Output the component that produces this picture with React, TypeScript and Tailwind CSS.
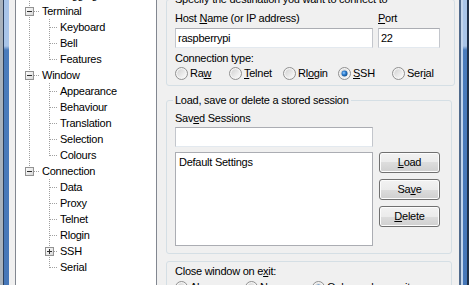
type TreeRow = {
  label: string
  level: 0 | 1
  box?: 'minus' | 'plus'
  trunk?: 'full' | 'top' | 'bottom'
  branch?: 'full' | 'top'
}

const rows: TreeRow[] = [
  { label: 'Session', level: 0, box: 'minus', trunk: 'bottom' },
  { label: 'Logging', level: 1, trunk: 'full', branch: 'top' },
  { label: 'Terminal', level: 0, box: 'minus', trunk: 'full' },
  { label: 'Keyboard', level: 1, trunk: 'full', branch: 'full' },
  { label: 'Bell', level: 1, trunk: 'full', branch: 'full' },
  { label: 'Features', level: 1, trunk: 'full', branch: 'top' },
  { label: 'Window', level: 0, box: 'minus', trunk: 'full' },
  { label: 'Appearance', level: 1, trunk: 'full', branch: 'full' },
  { label: 'Behaviour', level: 1, trunk: 'full', branch: 'full' },
  { label: 'Translation', level: 1, trunk: 'full', branch: 'full' },
  { label: 'Selection', level: 1, trunk: 'full', branch: 'full' },
  { label: 'Colours', level: 1, trunk: 'full', branch: 'top' },
  { label: 'Connection', level: 0, box: 'minus', trunk: 'top' },
  { label: 'Data', level: 1, branch: 'full' },
  { label: 'Proxy', level: 1, branch: 'full' },
  { label: 'Telnet', level: 1, branch: 'full' },
  { label: 'Rlogin', level: 1, branch: 'full' },
  { label: 'SSH', level: 1, branch: 'full', box: 'plus' },
  { label: 'Serial', level: 1, branch: 'top' },
]

const dot = '#a0a0a0'

function Connector({ row }: { row: TreeRow }) {
  const w = row.level === 0 ? 26 : 44
  const bx = row.level === 0 ? 13 : 33
  const hEnd = row.level === 0 ? 24 : 42
  return (
    <svg width={w} height={16} className="shrink-0">
      <defs>
        <linearGradient id="exp" x1="0" y1="0" x2="1" y2="1">
          <stop offset="0" stopColor="#ffffff" />
          <stop offset="1" stopColor="#d6d6d6" />
        </linearGradient>
      </defs>
      {row.trunk && (
        <line
          x1={13.5}
          x2={13.5}
          y1={row.trunk === 'bottom' ? 8 : 0}
          y2={row.trunk === 'top' ? 9 : 16}
          stroke={dot}
          strokeDasharray="1 1"
        />
      )}
      {row.branch && (
        <line x1={33.5} x2={33.5} y1={0} y2={row.branch === 'top' ? 9 : 16} stroke={dot} strokeDasharray="1 1" />
      )}
      <line x1={row.box ? bx + 5 : bx + 1} x2={hEnd} y1={8.5} y2={8.5} stroke={dot} strokeDasharray="1 1" />
      {row.box && (
        <g>
          <rect x={bx - 3.5} y={4.5} width={8} height={8} fill="url(#exp)" stroke="#929292" />
          <line x1={bx - 2} x2={bx + 3} y1={8.5} y2={8.5} stroke="#2e2e2e" />
          {row.box === 'plus' && <line x1={bx + 0.5} x2={bx + 0.5} y1={6} y2={11} stroke="#2e2e2e" />}
        </g>
      )}
    </svg>
  )
}

function Radio({ checked = false }: { checked?: boolean }) {
  return (
    <svg width={13} height={13} className="shrink-0">
      <defs>
        <linearGradient id="rdo" x1="0" y1="0" x2="1" y2="1">
          <stop offset="0" stopColor="#d2d2d2" />
          <stop offset="1" stopColor="#fbfbfb" />
        </linearGradient>
        <radialGradient id="rdot" cx="0.4" cy="0.4" r="0.6">
          <stop offset="0" stopColor="#9fd2ff" />
          <stop offset="0.5" stopColor="#2d7ed1" />
          <stop offset="1" stopColor="#14508f" />
        </radialGradient>
      </defs>
      <circle cx={6.5} cy={6.5} r={6} fill="#f4f4f4" stroke="#8f8f8f" />
      <circle cx={6.5} cy={6.5} r={4.3} fill="url(#rdo)" />
      {checked && <circle cx={6.5} cy={6.5} r={3} fill="url(#rdot)" />}
    </svg>
  )
}

function RadioItem({ width, checked, children }: { width: string; checked?: boolean; children: React.ReactNode }) {
  return (
    <div className={`flex items-center gap-[2px] ${width}`}>
      <Radio checked={checked} />
      <span>{children}</span>
    </div>
  )
}

function WinButton({ children }: { children: React.ReactNode }) {
  return (
    <button className="flex h-[21px] w-[61px] items-center justify-center rounded-[3px] border border-[#707070] bg-[linear-gradient(to_bottom,#f2f2f2_0%,#ebebeb_50%,#dddddd_50%,#cfcfcf_100%)] shadow-[inset_0_0_0_1px_#fcfcfc]">
      {children}
    </button>
  )
}

const inputBox = 'h-[20px] border border-[#c3c6cc] border-t-[#abadb3] border-b-[#e3e9ef] bg-white px-[2px] flex items-center'

export default function App() {
  return (
    <div className="flex h-[285px] w-[469px] overflow-hidden font-['Liberation_Sans',Arial,sans-serif] text-[11px] leading-[13px] tracking-[-0.25px] text-black">
      {/* left window frame */}
      <div className="flex w-[9px] shrink-0">
        <div className="w-[3px] bg-[#a9b2bb]" />
        <div className="w-[1px] bg-[#2c405c]" />
        <div className="w-[5px] bg-[linear-gradient(to_bottom,#a9c5e8_0px,#a9c5e8_46px,#4a7cbc_50px,#4677b8_100%)]" />
      </div>

      <div className="flex flex-1 bg-[#f0f0f0] pl-[6px]">
        {/* tree */}
        <div className="my-[-10px] w-[142px] shrink-0 overflow-hidden border border-[#828790] bg-white">
          <div className="mt-[-20px] flex flex-col">
            {rows.map((row) => (
              <div key={row.label} className="flex h-[16px] items-center whitespace-nowrap">
                <Connector row={row} />
                <span>{row.label}</span>
              </div>
            ))}
          </div>
        </div>

        {/* right side */}
        <div className="ml-[9px] mt-[-7px] flex w-[286px] shrink-0 flex-col">
          <fieldset className="rounded-[3px] border border-[#d5dfe5] px-[8px] pb-[5px]">
            <legend className="ml-[-2px] px-[2px]">Specify the destination you want to connect to</legend>
            <div className="mt-[6px] flex">
              <div className="flex w-[198px] flex-col">
                <span>
                  Host <u>N</u>ame (or IP address)
                </span>
                <div className={`mt-[3px] ${inputBox}`}>raspberrypi</div>
              </div>
              <div className="ml-[5px] flex w-[62px] flex-col">
                <span>
                  <u>P</u>ort
                </span>
                <div className={`mt-[3px] ${inputBox}`}>22</div>
              </div>
            </div>
            <div className="mt-[4px]">Connection type:</div>
            <div className="mt-[1px] flex h-[14px] items-center">
              <RadioItem width="w-[54px]">
                Ra<u>w</u>
              </RadioItem>
              <RadioItem width="w-[54px]">
                <u>T</u>elnet
              </RadioItem>
              <RadioItem width="w-[55px]">
                Rl<u>o</u>gin
              </RadioItem>
              <RadioItem width="w-[54px]" checked>
                <u>S</u>SH
              </RadioItem>
              <RadioItem width="w-[54px]">
                Ser<u>i</u>al
              </RadioItem>
            </div>
          </fieldset>

          <fieldset className="mt-[8px] rounded-[3px] border border-[#d5dfe5] px-[8px] pb-[7px]">
            <legend className="ml-[-2px] px-[2px]">Load, save or delete a stored session</legend>
            <div className="mt-[5px] flex">
              <div className="flex w-[198px] flex-col">
                <span>
                  Sav<u>e</u>d Sessions
                </span>
                <div className={`mt-[2px] ${inputBox}`} />
                <div className="mt-[5px] h-[94px] border border-[#abadb3] bg-white px-[3px] pt-[3px]">Default Settings</div>
              </div>
              <div className="ml-[6px] mt-[40px] flex flex-col gap-[6px]">
                <WinButton>
                  <u>L</u>oad
                </WinButton>
                <WinButton>
                  Sa<u>v</u>e
                </WinButton>
                <WinButton>
                  <u>D</u>elete
                </WinButton>
              </div>
            </div>
          </fieldset>

          <fieldset className="mt-[7px] rounded-[3px] border border-[#d5dfe5] px-[8px] pb-[6px] pt-[3px]">
            <div>
              Close window on e<u>x</u>it:
            </div>
            <div className="mt-[2px] flex h-[14px] items-center">
              <RadioItem width="w-[70px]">
                Al<u>w</u>ays
              </RadioItem>
              <RadioItem width="w-[67px]">
                Ne<u>v</u>er
              </RadioItem>
              <RadioItem width="w-[120px]" checked>
                Only on clean e<u>x</u>it
              </RadioItem>
            </div>
          </fieldset>
        </div>
      </div>

      {/* right window frame */}
      <div className="flex w-[10px] shrink-0">
        <div className="w-[2px] bg-[#506a8c]" />
        <div className="w-[2px] bg-[#c2d5ec]" />
        <div className="w-[4px] bg-[linear-gradient(to_bottom,#a9c5e8_0px,#a9c5e8_46px,#4a7cbc_50px,#4677b8_100%)]" />
        <div className="w-[2px] bg-[#1f3048]" />
      </div>
    </div>
  )
}
